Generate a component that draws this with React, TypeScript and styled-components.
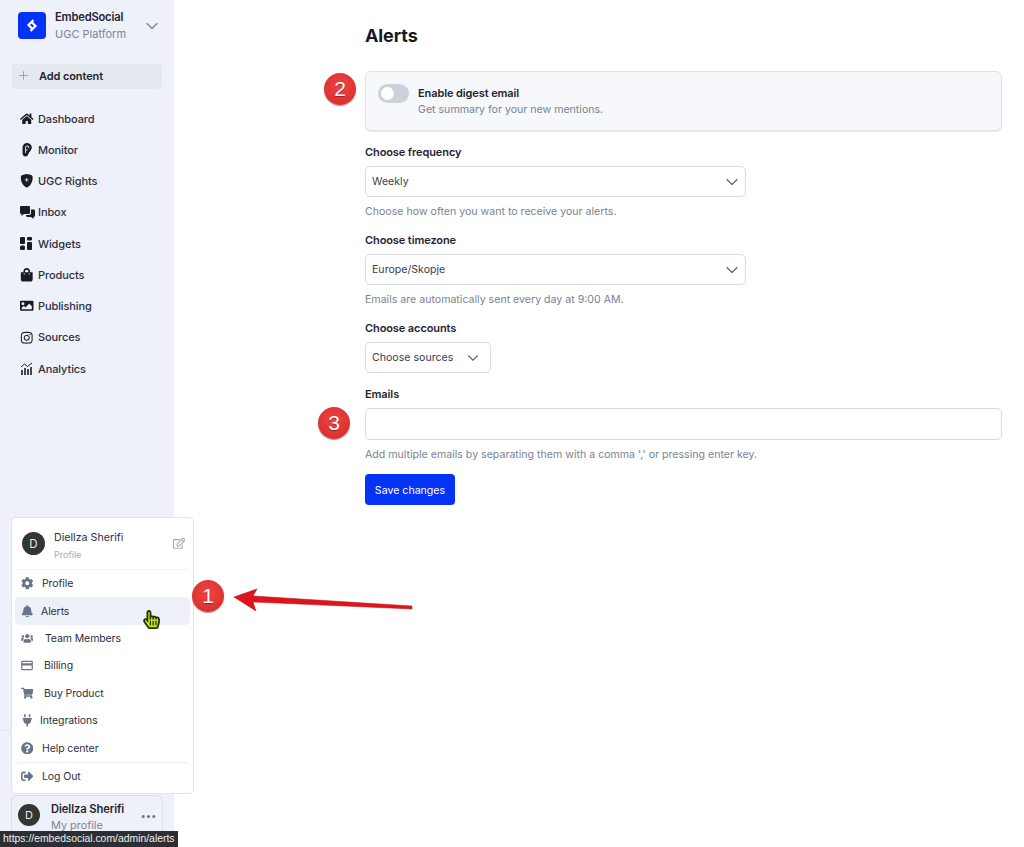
import React from "react";
import styled, { createGlobalStyle } from "styled-components";
import { ChevronDown, Plus } from "lucide-react";
import { BsEarFill, BsShieldFillPlus, BsThreeDots } from "react-icons/bs";
import {
  FaBell, FaCog, FaHome, FaImage, FaInstagram, FaPlug, FaQuestionCircle,
  FaRegEdit, FaShoppingBag, FaShoppingCart, FaSignOutAlt, FaUsers, FaHandPointer, FaRegHandPointer,
} from "react-icons/fa";
import { MdCreditCard } from "react-icons/md";

const Global = createGlobalStyle`
  html, body { margin: 0; padding: 0; background: #fff; }
  body { font-family: Inter, "Noto Sans", sans-serif; color: #1f2430; overflow: hidden; }
  * { box-sizing: border-box; }
`;

const Page = styled.div`
  position: relative; width: 1024px; height: 847px; display: flex; overflow: hidden;
`;
const Sidebar = styled.aside`
  width: 174px; height: 847px; background: #eef1f9; display: flex; flex-direction: column; padding-top: 12px;
`;
const Brand = styled.div`
  display: flex; align-items: center; padding-left: 18px; height: 27px;
`;
const BrandText = styled.div`
  margin-left: 9px; flex: 1; display: flex; flex-direction: column; gap: 3px;
`;
const BrandName = styled.div`
  font-size: 11.2px; line-height: 14px; font-weight: 600; letter-spacing: -0.2px; color: #1f2430;
`;
const BrandSub = styled.div`
  font-size: 11px; line-height: 14px; color: #7d8696;
`;
const BrandChevron = styled.div`
  width: 20px; height: 20px; margin-right: 12px; color: #7d8696; display: flex;
`;
const AddButton = styled.div`
  margin: 25px 12px 0; height: 25px; background: #e4e8ef; border-radius: 4px; display: flex; align-items: center;
  padding: 0 0 2px 5px; font-size: 11px; font-weight: 600; color: #1f2430; letter-spacing: -0.1px;
  svg { color: #8f97a5; margin-right: 9px; }
`;
const Nav = styled.nav`
  margin-top: 14px; display: flex; flex-direction: column;
`;
const NavRow = styled.div`
  height: 31.25px; display: flex; align-items: center; padding-left: 20px; font-size: 11px; font-weight: 500; color: #2b303c; letter-spacing: -0.1px;
`;
const NavIcon = styled.span`
  width: 18px; display: flex; align-items: center; color: #181c26; font-size: 13.5px;
`;
const SideFooter = styled.div`
  margin-top: auto; height: 117px; border-top: 1px solid #e2e6ee; display: flex; flex-direction: column; justify-content: flex-end; padding: 0 11px;
`;
const UserCard = styled.div`
  height: 52px; border: 1px solid #d9dee8; border-bottom: none; border-radius: 6px 6px 0 0; display: flex; align-items: flex-start; padding: 8px 5px 0 6px;
`;
const Avatar = styled.div<{ $size: number }>`
  width: ${p => p.$size}px; height: ${p => p.$size}px; border-radius: 50%; background: #333537; color: #e8e8e8;
  display: flex; align-items: center; justify-content: center; font-size: ${p => p.$size * 0.5}px; flex: none;
`;
const UserText = styled.div`
  margin-left: 11px; flex: 1;
`;
const UserName = styled.div`
  font-size: 11.2px; line-height: 14px; font-weight: 600; letter-spacing: -0.1px; margin-top: -2px;
`;
const UserSub = styled.div`
  font-size: 10.9px; line-height: 14px; color: #7d8696; margin-top: 2px;
`;
const Dots = styled.div`
  color: #6f7787; font-size: 17px; display: flex; margin-top: 4px;
`;

const Main = styled.main`
  flex: 1; padding: 26px 22px 0 191px;
`;
const Title = styled.h1`
  margin: 0; font-size: 18px; line-height: 20px; font-weight: 700; color: #15181f; letter-spacing: -0.1px;
`;
const DigestCard = styled.div`
  margin-top: 25px; height: 60px; background: #f6f8fb; border: 1px solid #dde1e8; border-radius: 6px; padding: 12px 12px; display: flex; align-items: flex-start;
  box-shadow: 0 1px 1px rgba(120, 130, 150, 0.18);
`;
const Toggle = styled.div`
  width: 31px; height: 19px; border-radius: 10px; background: #cbd2dc; padding: 3px; flex: none;
`;
const Knob = styled.div`
  width: 13px; height: 13px; border-radius: 50%; background: #fff;
`;
const DigestText = styled.div`
  margin-left: 9px;
`;
const DigestTitle = styled.div`
  font-size: 11px; line-height: 14px; font-weight: 600; color: #1f2430; letter-spacing: -0.1px; margin-top: 2px;
`;
const DigestSub = styled.div`
  font-size: 10.6px; line-height: 14px; color: #7a8392; margin-top: 3px;
`;
const Label = styled.div<{ $top: number }>`
  font-size: 11px; line-height: 14px; font-weight: 600; color: #1f2430; margin-top: ${p => p.$top}px; letter-spacing: -0.1px;
`;
const Select = styled.div<{ $width: number; $pad: number }>`
  width: ${p => p.$width}px; height: 31px; margin-top: 7px; border: 1px solid #d8dce3; border-radius: 5px; display: flex; align-items: center; justify-content: space-between;
  padding: 0 ${p => p.$pad}px 0 6px; font-size: 10.6px; color: #3a404c; background: #fff;
  svg { color: #5f6b7c; }
`;
const Help = styled.div`
  margin-top: 8px; font-size: 10.6px; line-height: 14px; color: #7a8392;
`;
const EmailInput = styled.div`
  height: 32px; margin: 7px 0 1px; border: 1px solid #d8dce3; border-radius: 5px; background: #fff;
`;
const Save = styled.button`
  display: block; margin-top: 12px; width: 90px; height: 31px; border: 0; border-radius: 4px; background: #0433f5; color: #fff; font-family: inherit; font-size: 10.6px; padding: 1px 0 0;
`;

const Popup = styled.div`
  position: absolute; left: 11px; top: 517px; width: 183px; height: 277px; background: #fff; border: 1px solid #e1e5ea; border-radius: 5px;
  padding: 0 3px; display: flex; flex-direction: column;
`;
const PopHead = styled.div`
  height: 52px; display: flex; align-items: center; padding-left: 6px; margin: 0 1px; border-bottom: 1px solid #f0f2f5; flex: none;
`;
const PopHeadText = styled.div`
  margin-left: 9px; flex: 1; padding-top: 4px;
`;
const PopName = styled.div`
  font-size: 10.7px; line-height: 14px; color: #2b303c;
`;
const PopSub = styled.div`
  font-size: 9px; line-height: 12px; color: #a5acb8; margin-top: 4px;
`;
const EditIcon = styled.div`
  color: #a3aab5; font-size: 12.5px; display: flex; margin-right: 4px;
`;
const PopList = styled.div`
  display: flex; flex-direction: column;
`;
const PopRow = styled.div<{ $gap: number; $active?: boolean; $divided?: boolean }>`
  height: ${p => (p.$divided ? 28 : 27.4)}px; display: flex; align-items: center; padding-left: 5px; font-size: 10.5px; color: #2b303c; border-radius: 5px; letter-spacing: -0.1px;
  background: ${p => (p.$active ? "#eef0f7" : "transparent")};
  border-top: ${p => (p.$divided ? "1px solid #eceef1" : "none")};
  span { width: 14px; display: flex; justify-content: center; color: #6a7488; font-size: 12.5px; margin-right: ${p => p.$gap}px; flex: none; }
`;

const Badge = styled.div<{ $x: number; $y: number }>`
  position: absolute; left: ${p => p.$x - 16}px; top: ${p => p.$y - 16}px; width: 32px; height: 32px; border-radius: 50%;
  background: radial-gradient(circle at 50% 40%, #ef4444, #dc3030 75%, #bf2424); color: #fff; font-family: "Liberation Sans", sans-serif; font-size: 21px;
  display: flex; align-items: center; justify-content: center; box-shadow: 0 1px 1px rgba(90, 0, 0, 0.45); text-shadow: 0 1px 1px rgba(90, 0, 0, 0.5);
`;
const Arrow = styled.svg`
  position: absolute; left: 230px; top: 585px;
`;
const Hand = styled.div`
  position: absolute; left: 142px; top: 610px; width: 15px; height: 20px; font-size: 19px;
  svg { position: absolute; left: 0; top: 0; }
`;
const StatusTip = styled.div`
  position: absolute; left: 0; bottom: 0; width: 178px; height: 16px; background: #2b2f33; color: #eef0f2; font-family: "Liberation Sans", sans-serif; font-size: 10.4px; line-height: 16px; padding-left: 3px; white-space: nowrap;
`;

const navItems: [React.ReactNode, string][] = [
  [<FaHome />, "Dashboard"],
  [<BsEarFill />, "Monitor"],
  [<BsShieldFillPlus />, "UGC Rights"],
  [
    <svg width="15" height="13" viewBox="0 0 15 13" fill="currentColor">
      <path d="M0 1.2C0 .5.5 0 1.2 0h7.6C9.5 0 10 .5 10 1.2v5.6C10 7.5 9.5 8 8.8 8H4L1.5 10V8h-.3C.5 8 0 7.500 0 6.800z" />
      <path d="M11 3.500h2.800c.7 0 1.200.5 1.200 1.200v5.100c0 .7-.5 1.200-1.200 1.200h-.3V13L11 11H7.200C6.500 11 6 10.500 6 9.800V9h3c1.100 0 2-.9 2-2z" />
    </svg>,
    "Inbox",
  ],
  [
    <svg width="12" height="13" viewBox="0 0 12 13" fill="currentColor">
      <rect x="0" y="0" width="5" height="7" rx="1" />
      <rect x="0" y="8.500" width="5" height="4.500" rx="1.500" />
      <rect x="7" y="0" width="5" height="3.500" rx="1" />
      <rect x="7" y="5" width="5" height="8" rx="1" />
    </svg>,
    "Widgets",
  ],
  [<FaShoppingBag />, "Products"],
  [<FaImage />, "Publishing"],
  [<FaInstagram />, "Sources"],
  [
    <svg width="13" height="13" viewBox="0 0 13 13" fill="none" stroke="currentColor">
      <path d="M1 5l3.500-3 3 2.500L12 1" strokeWidth="1" />
      <path d="M2 8v5M5 6v7M8 7v6M11 5v8" strokeWidth="1.600" />
    </svg>,
    "Analytics",
  ],
];

const popItems: { icon: React.ReactNode; label: string; gap: number; active?: boolean; divided?: boolean }[] = [
  { icon: <FaCog />, label: "Profile", gap: 8 },
  { icon: <FaBell />, label: "Alerts", gap: 7, active: true },
  { icon: <FaUsers />, label: "Team Members", gap: 11 },
  { icon: <MdCreditCard style={{ fontSize: 15 }} />, label: "Billing", gap: 10 },
  { icon: <FaShoppingCart />, label: "Buy Product", gap: 10 },
  { icon: <FaPlug />, label: "Integrations", gap: 6 },
  { icon: <FaQuestionCircle />, label: "Help center", gap: 8 },
  { icon: <FaSignOutAlt />, label: "Log Out", gap: 8, divided: true },
];

export default function App() {
  return (
    <Page>
      <Global />
      <Sidebar>
        <Brand>
          <svg width="28" height="27" viewBox="0 0 28 27">
            <rect width="28" height="27" rx="4" fill="#0433f5" />
            <path d="M15.500 8L10.500 13l3.500 3.500M12.500 19l5-5-3.500-3.500" fill="none" stroke="#fff" strokeWidth="2.200" />
          </svg>
          <BrandText>
            <BrandName>EmbedSocial</BrandName>
            <BrandSub>UGC Platform</BrandSub>
          </BrandText>
          <BrandChevron><ChevronDown size={20} strokeWidth={1.5} /></BrandChevron>
        </Brand>
        <AddButton><Plus size={13} strokeWidth={1.5} />Add content</AddButton>
        <Nav>
          {navItems.map(([icon, label]) => (
            <NavRow key={label}><NavIcon>{icon}</NavIcon>{label}</NavRow>
          ))}
        </Nav>
        <SideFooter>
          <UserCard>
            <Avatar $size={22}>D</Avatar>
            <UserText>
              <UserName>Diellza Sherifi</UserName>
              <UserSub>My profile</UserSub>
            </UserText>
            <Dots><BsThreeDots /></Dots>
          </UserCard>
        </SideFooter>
      </Sidebar>
      <Main>
        <Title>Alerts</Title>
        <DigestCard>
          <Toggle><Knob /></Toggle>
          <DigestText>
            <DigestTitle>Enable digest email</DigestTitle>
            <DigestSub>Get summary for your new mentions.</DigestSub>
          </DigestText>
        </DigestCard>
        <Label $top={14}>Choose frequency</Label>
        <Select $width={381} $pad={3}>Weekly<ChevronDown size={20} strokeWidth={1.5} /></Select>
        <Help>Choose how often you want to receive your alerts.</Help>
        <Label $top={14}>Choose timezone</Label>
        <Select $width={381} $pad={3}>Europe/Skopje<ChevronDown size={20} strokeWidth={1.5} /></Select>
        <Help>Emails are automatically sent every day at 9:00 AM.</Help>
        <Label $top={14}>Choose accounts</Label>
        <Select $width={126} $pad={8}>Choose sources<ChevronDown size={18} strokeWidth={1.5} /></Select>
        <Label $top={14}>Emails</Label>
        <EmailInput />
        <Help>Add multiple emails by separating them with a comma ',' or pressing enter key.</Help>
        <Save>Save changes</Save>
      </Main>

      <Popup>
        <PopHead>
          <Avatar $size={23}>D</Avatar>
          <PopHeadText>
            <PopName>Diellza Sherifi</PopName>
            <PopSub>Profile</PopSub>
          </PopHeadText>
          <EditIcon><FaRegEdit /></EditIcon>
        </PopHead>
        <PopList>
          {popItems.map(i => (
            <PopRow key={i.label} $gap={i.gap} $active={i.active} $divided={i.divided}>
              <span>{i.icon}</span>{i.label}
            </PopRow>
          ))}
        </PopList>
      </Popup>

      <Hand>
        <FaHandPointer color="#b9e31c" />
        <FaRegHandPointer color="#26300a" />
      </Hand>

      <Badge $x={208} $y={596}>1</Badge>
      <Badge $x={340} $y={89}>2</Badge>
      <Badge $x={334} $y={423}>3</Badge>
      <Arrow width="190" height="30" viewBox="0 0 190 30">
        <path d="M4 12L27 4l-4 7 159 10v3L23 17l3 9z" fill="#e0141c" stroke="#b81118" strokeWidth="0.5" />
      </Arrow>

      <StatusTip>https://embedsocial.com/admin/alerts</StatusTip>
    </Page>
  );
}
